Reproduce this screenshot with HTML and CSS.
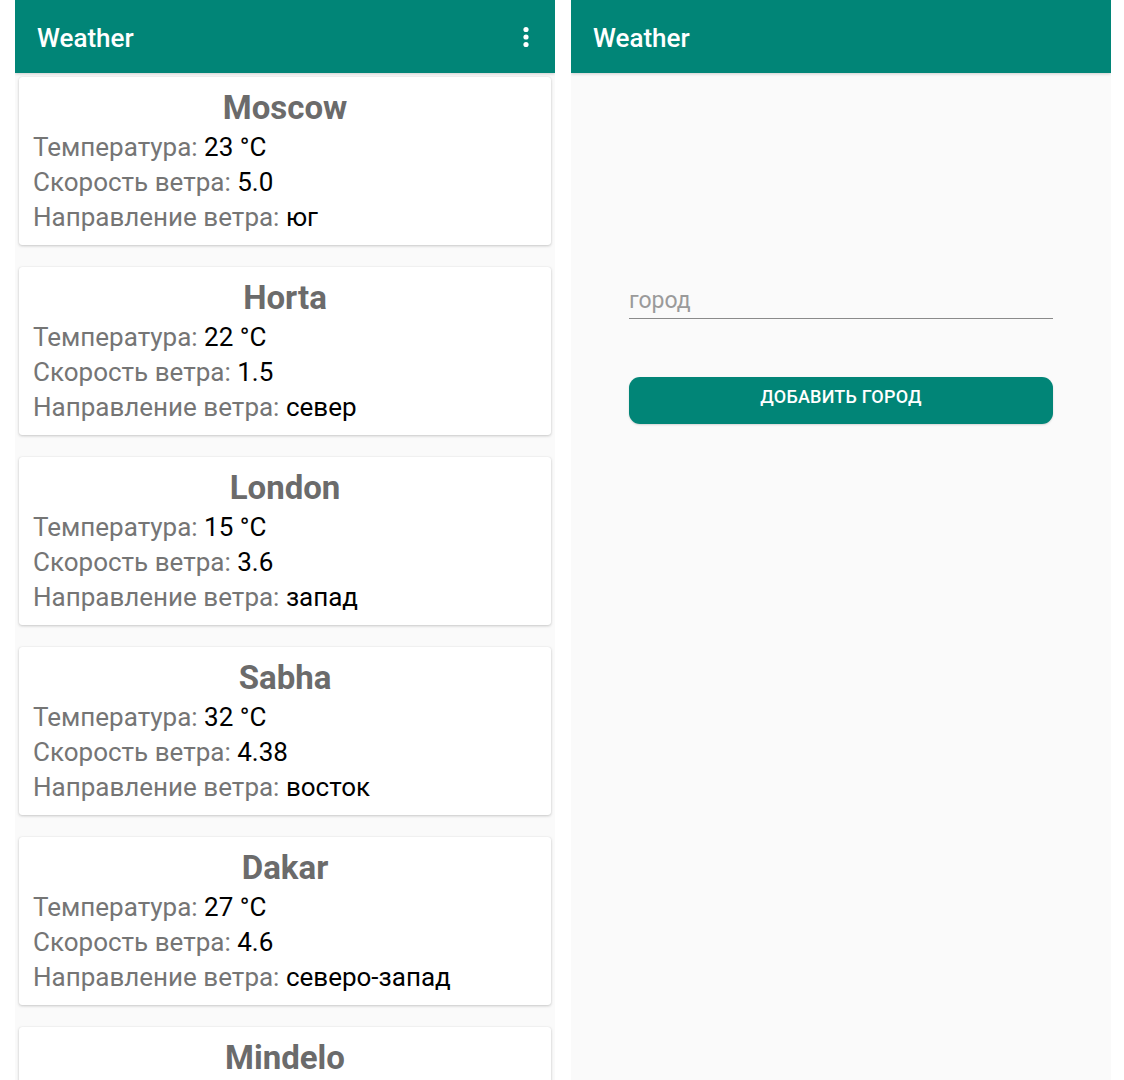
FILE: index.html
```html
<!DOCTYPE html>
<html lang="ru">
<head>
<meta charset="utf-8">
<title>Weather</title>
<link rel="stylesheet" href="styles.css">
</head>
<body>
<div class="screens">
  <section class="screen screen-list">
    <header class="appbar">
      <span class="appbar-title">Weather</span>
      <svg class="menu-icon" width="8" height="24" viewBox="0 0 8 24" aria-hidden="true">
        <circle cx="4" cy="4.5" r="2.6" fill="#fff"/>
        <circle cx="4" cy="12" r="2.6" fill="#fff"/>
        <circle cx="4" cy="19.5" r="2.6" fill="#fff"/>
      </svg>
    </header>
    <div class="list">
      <article class="card">
        <h2 class="city">Moscow</h2>
        <p class="row"><span class="label">Температура:</span> <span class="value">23 °C</span></p>
        <p class="row"><span class="label">Скорость ветра:</span> <span class="value">5.0</span></p>
        <p class="row"><span class="label">Направление ветра:</span> <span class="value">юг</span></p>
      </article>
      <article class="card">
        <h2 class="city">Horta</h2>
        <p class="row"><span class="label">Температура:</span> <span class="value">22 °C</span></p>
        <p class="row"><span class="label">Скорость ветра:</span> <span class="value">1.5</span></p>
        <p class="row"><span class="label">Направление ветра:</span> <span class="value">север</span></p>
      </article>
      <article class="card">
        <h2 class="city">London</h2>
        <p class="row"><span class="label">Температура:</span> <span class="value">15 °C</span></p>
        <p class="row"><span class="label">Скорость ветра:</span> <span class="value">3.6</span></p>
        <p class="row"><span class="label">Направление ветра:</span> <span class="value">запад</span></p>
      </article>
      <article class="card">
        <h2 class="city">Sabha</h2>
        <p class="row"><span class="label">Температура:</span> <span class="value">32 °C</span></p>
        <p class="row"><span class="label">Скорость ветра:</span> <span class="value">4.38</span></p>
        <p class="row"><span class="label">Направление ветра:</span> <span class="value">восток</span></p>
      </article>
      <article class="card">
        <h2 class="city">Dakar</h2>
        <p class="row"><span class="label">Температура:</span> <span class="value">27 °C</span></p>
        <p class="row"><span class="label">Скорость ветра:</span> <span class="value">4.6</span></p>
        <p class="row"><span class="label">Направление ветра:</span> <span class="value">северо-запад</span></p>
      </article>
      <article class="card">
        <h2 class="city">Mindelo</h2>
      </article>
    </div>
  </section>
  <section class="screen screen-add">
    <header class="appbar">
      <span class="appbar-title">Weather</span>
    </header>
    <form class="add-form">
      <input class="city-input" type="text" placeholder="город">
      <button class="add-button" type="button">ДОБАВИТЬ ГОРОД</button>
    </form>
  </section>
</div>
</body>
</html>
```

FILE: styles.css
```css
* { box-sizing: border-box; }

html, body {
  margin: 0;
  padding: 0;
  background: #ffffff;
  font-family: Roboto, "Noto Sans", "Liberation Sans", sans-serif;
}

.screens {
  display: flex;
  gap: 16px;
  padding-left: 15px;
  height: 1080px;
  overflow: hidden;
}

.screen {
  width: 540px;
  height: 1080px;
  background: #fafafa;
  display: flex;
  flex-direction: column;
  overflow: hidden;
}

.appbar {
  height: 73px;
  flex: none;
  background: #018577;
  display: flex;
  align-items: center;
  justify-content: space-between;
  padding: 0 22px 0 22px;
  box-shadow: 0 1px 3px rgba(0,0,0,0.18);
  position: relative;
  z-index: 1;
}

.appbar-title {
  color: #ffffff;
  font-size: 26px;
  font-weight: 500;
  margin-top: 2px;
}

.menu-icon {
  margin-right: 3px;
}

.list {
  display: flex;
  flex-direction: column;
  gap: 22px;
  padding: 4px 4px 0 4px;
}

.card {
  flex: none;
  background: #ffffff;
  height: 168px;
  border-radius: 3px;
  box-shadow: 0 1px 3px rgba(0,0,0,0.2), 0 0 1px rgba(0,0,0,0.12);
  padding: 9px 14px 0 14px;
}

.city {
  margin: 0;
  text-align: center;
  font-size: 33px;
  font-weight: 700;
  color: #6b6b6b;
  line-height: 44px;
}

.row {
  margin: 0;
  font-size: 26px;
  line-height: 35px;
  white-space: nowrap;
}

.label { color: #757575; }
.value { color: #000000; }

.add-form {
  display: flex;
  flex-direction: column;
  padding: 212px 58px 0 58px;
}

.city-input {
  width: 100%;
  height: 34px;
  border: none;
  border-bottom: 1.5px solid #8a8a8a;
  background: transparent;
  font-family: inherit;
  font-size: 23px;
  color: #222;
  padding: 0 0 3px 0;
  outline: none;
}

.city-input::placeholder {
  color: #9a9a9a;
}

.add-button {
  margin-top: 58px;
  height: 47px;
  width: 100%;
  border: none;
  border-radius: 11px;
  background: #018577;
  color: #ffffff;
  font-family: inherit;
  font-size: 18px;
  font-weight: 500;
  letter-spacing: 0.2px;
  padding: 0 0 8px 0;
  box-shadow: 0 1px 2px rgba(0,0,0,0.15);
}
```
